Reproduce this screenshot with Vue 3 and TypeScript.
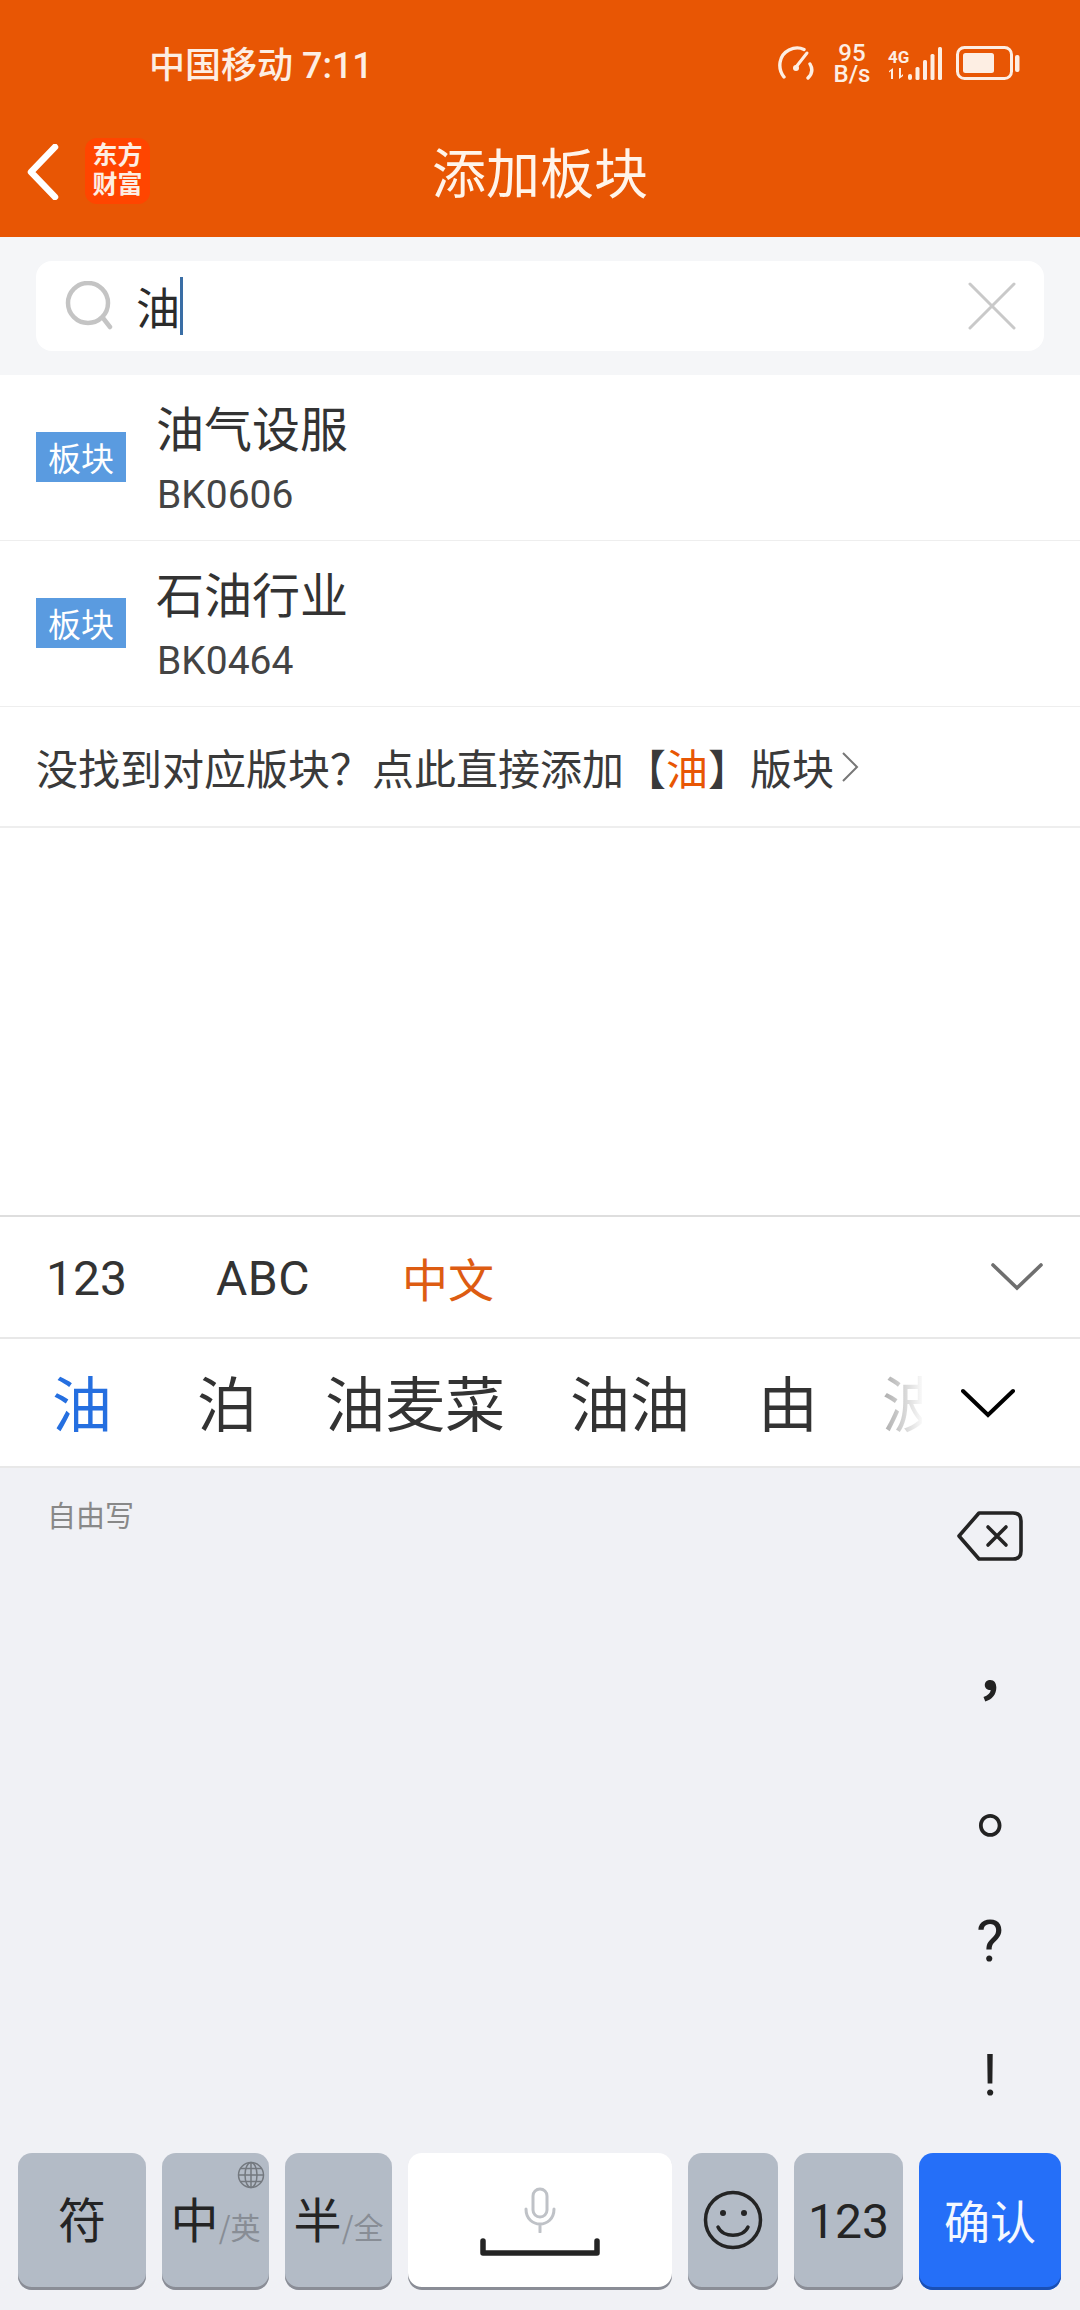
<script setup lang="ts">
interface Row { name: string; code: string }
const rows: Row[] = [
  { name: '油气设服', code: 'BK0606' },
  { name: '石油行业', code: 'BK0464' },
]
</script>

<template>
  <div class="page">
    <header class="head">
      <div class="status">
        <span class="carrier">中国移动 7:11</span>
        <div class="sys">
          <svg class="gauge" width="40" height="34" viewBox="0 0 40 34" fill="none" stroke="#fdeee3" stroke-linecap="round">
            <path d="M7 31 C0 22 2 9 12 4 C17 1.5 23 1.5 27 3.5" stroke-width="3.4" />
            <path d="M33 18 C36 23 35 28 31 32" stroke-width="3.4" />
            <path d="M19 21 L30 7" stroke-width="3" />
            <circle cx="19" cy="22" r="3" fill="#fdeee3" stroke="none" />
          </svg>
          <div class="speed"><span>95</span><span>B/s</span></div>
          <div class="net">
            <span class="g4">4G</span>
            <svg width="20" height="11" viewBox="0 0 20 11" fill="#fdeee3">
              <path d="M5 0v11H3V3L1 4.500V3zM11 0h2v8l2-2v2l-4 3z" />
            </svg>
          </div>
          <svg class="signal" width="36" height="33" viewBox="0 0 36 33" fill="#fdeee3">
            <rect x="0" y="27" width="4" height="6" rx="2" />
            <rect x="7.500" y="20" width="4" height="13" rx="1.500" />
            <rect x="15" y="13" width="4" height="20" rx="1.500" />
            <rect x="22.500" y="7" width="4" height="26" rx="1.500" />
            <rect x="30" y="0" width="4" height="33" rx="1.500" />
          </svg>
          <svg class="battery" width="64" height="34" viewBox="0 0 64 34" fill="none">
            <rect x="1.500" y="1.500" width="54" height="31" rx="7" stroke="#fdeee3" stroke-width="3" />
            <rect x="7" y="7" width="31" height="20" rx="2.500" fill="#fdeee3" />
            <rect x="59" y="9" width="4.500" height="17" rx="2" fill="#fdeee3" />
          </svg>
        </div>
      </div>
      <nav class="nav">
        <div class="nav-left">
          <svg class="back" width="32" height="56" viewBox="0 0 32 56" fill="none" stroke="#fff" stroke-width="6.500" stroke-linecap="round" stroke-linejoin="round">
            <path d="M28 3 L4 28 L28 53" />
          </svg>
          <div class="logo"><span>东方</span><span>财富</span></div>
        </div>
        <h1 class="title">添加板块</h1>
        <div></div>
      </nav>
    </header>

    <section class="search-wrap">
      <div class="search">
        <svg class="lens" width="48" height="50" viewBox="0 0 48 50" fill="none" stroke="#c4c4c4" stroke-width="4.500" stroke-linecap="round">
          <circle cx="23" cy="22" r="20" />
          <path d="M38 37 L45 46" />
        </svg>
        <span class="query">油</span>
        <span class="caret"></span>
        <svg class="clear" width="48" height="48" viewBox="0 0 48 48" stroke="#c9c9c9" stroke-width="3" stroke-linecap="round">
          <path d="M2 2 L46 46 M46 2 L2 46" />
        </svg>
      </div>
    </section>

    <section class="list">
      <div v-for="r in rows" :key="r.code" class="row">
        <span class="badge">板块</span>
        <div class="row-text">
          <span class="name">{{ r.name }}</span>
          <span class="code">{{ r.code }}</span>
        </div>
      </div>
      <div class="add">
        <span>没找到对应版块？点此直接添加【<em>油</em>】版块</span>
        <svg width="18" height="30" viewBox="0 0 18 30" fill="none" stroke="#777" stroke-width="2">
          <path d="M2 1 L16 15 L2 29" />
        </svg>
      </div>
    </section>

    <section class="blank"></section>

    <section class="tabs">
      <span class="tab t1">123</span>
      <span class="tab t2">ABC</span>
      <span class="tab active">中文</span>
      <svg class="tabs-chev" width="52" height="28" viewBox="0 0 52 28" fill="none" stroke="#6f6f6f" stroke-width="3.600" stroke-linecap="round">
        <path d="M2 2 L26 25 L50 2" />
      </svg>
    </section>

    <section class="cands">
      <div class="cand-track">
        <span class="cand cur">油</span>
        <span class="cand c2">泊</span>
        <span class="cand c3">油麦菜</span>
        <span class="cand c4">油油</span>
        <span class="cand c5">由</span>
        <span class="cand c6">波</span>
      </div>
      <svg class="cand-chev" width="54" height="30" viewBox="0 0 54 30" fill="none" stroke="#000" stroke-width="4" stroke-linecap="round">
        <path d="M2 3 L27 27 L52 3" />
      </svg>
    </section>

    <section class="kb">
      <div class="pad">
        <span class="hint">自由写</span>
        <div class="punct">
          <svg class="del" width="66" height="50" viewBox="0 0 66 50" fill="none" stroke="#242424" stroke-width="3.600" stroke-linejoin="round" stroke-linecap="round">
            <path d="M22 2 H56 Q64 2 64 10 V40 Q64 48 56 48 H22 L2 25 Z" />
            <path d="M31 16 L49 34 M49 16 L31 34" />
          </svg>
          <span class="p comma">，</span>
          <span class="p dot">。</span>
          <span class="p q">?</span>
          <span class="p ex">!</span>
        </div>
      </div>
      <div class="keys">
        <div class="key k1"><span class="big">符</span></div>
        <div class="key k2">
          <svg class="globe" width="28" height="28" viewBox="0 0 28 28" fill="none" stroke="#74797f" stroke-width="1.500">
            <circle cx="14" cy="14" r="12.500" />
            <ellipse cx="14" cy="14" rx="6" ry="12.500" />
            <path d="M14 1.500 V26.500 M1.500 14 H26.500 M3.500 7.500 H24.500 M3.500 20.500 H24.500" />
          </svg>
          <span class="big">中</span><span class="sub">/英</span>
        </div>
        <div class="key k2"><span class="big">半</span><span class="sub">/全</span></div>
        <div class="key space">
          <svg width="40" height="46" viewBox="0 0 40 46" fill="none" stroke="#bfc2c7" stroke-width="3" stroke-linecap="round">
            <rect x="13" y="2" width="14" height="28" rx="7" />
            <path d="M6 22 C6 42 34 42 34 22 M20 37 V45" />
          </svg>
          <svg width="120" height="18" viewBox="0 0 120 18" fill="none" stroke="#242424" stroke-width="5.500" stroke-linecap="round" stroke-linejoin="round">
            <path d="M3 3 V15 H117 V3" />
          </svg>
        </div>
        <div class="key k3">
          <svg width="60" height="60" viewBox="0 0 60 60" fill="none" stroke="#242424" stroke-width="3.500" stroke-linecap="round">
            <circle cx="30" cy="30" r="27.500" />
            <path d="M15 37 C20 48 40 48 45 37" />
            <circle cx="20" cy="23" r="3" fill="#242424" stroke="none" />
            <circle cx="41" cy="23" r="3" fill="#242424" stroke="none" />
          </svg>
        </div>
        <div class="key k4"><span class="num">123</span></div>
        <div class="key ok"><span>确认</span></div>
      </div>
    </section>
  </div>
</template>

<style scoped>
.page {
  width: 1080px;
  height: 2310px;
  display: flex;
  flex-direction: column;
  background: #fff;
  overflow: hidden;
  font-family: "Noto Sans CJK SC", "Noto Sans", Roboto, sans-serif;
  color: #333;
}
.head {
  height: 237px;
  flex: none;
  background: #e85604;
  color: #fff;
}
.status {
  height: 126px;
  box-sizing: border-box;
  padding: 0 60px 0 149px;
  display: flex;
  align-items: center;
  justify-content: space-between;
}
.carrier {
  font-size: 36px;
  color: #fdeee3;
  font-family: Roboto, "Noto Sans CJK SC", sans-serif;
  font-weight: 500;
  margin-top: -3px;
}
.sys {
  display: flex;
  align-items: center;
  color: #fdeee3;
}
.speed {
  display: flex;
  flex-direction: column;
  align-items: center;
  margin-left: 16px;
  margin-top: 2px;
  font: 500 24px/21px Roboto, sans-serif;
  width: 38px;
}
.net {
  display: flex;
  flex-direction: column;
  margin-left: 17px;
  width: 21px;
}
.g4 {
  font: 700 17px/18px Roboto, sans-serif;
  height: 20px;
}
.signal { margin-left: -1px; }
.battery { margin-left: 12px; }
.nav {
  height: 92px;
  display: grid;
  grid-template-columns: 1fr auto 1fr;
  align-items: center;
}
.nav-left {
  display: flex;
  align-items: center;
  padding-left: 27px;
}
.logo {
  width: 65px;
  height: 66px;
  margin-left: 26px;
  margin-top: -2px;
  padding-bottom: 6px;
  box-sizing: border-box;
  background: #ff4500;
  border-radius: 12px;
  display: flex;
  flex-direction: column;
  align-items: center;
  justify-content: center;
  font: 700 25px/29px "Noto Sans CJK SC", sans-serif;
  color: #fdeee3;
}
.title {
  margin: 0 0 3px;
  font-size: 54px;
  font-weight: 400;
  line-height: 70px;
  color: #fff4ea;
}
.search-wrap {
  height: 138px;
  flex: none;
  box-sizing: border-box;
  padding: 24px 36px;
  background: #f5f6f8;
}
.search {
  height: 90px;
  background: #fff;
  border-radius: 16px;
  display: flex;
  align-items: center;
  padding: 0 28px 0 29px;
}
.query {
  margin-left: 23px;
  font-size: 44px;
  color: #2b2b2b;
}
.caret {
  width: 3px;
  height: 58px;
  margin-left: 0;
  background: #3a6ea5;
}
.clear { margin-left: auto; }
.list { flex: none; }
.row {
  height: 166px;
  box-sizing: border-box;
  border-bottom: 1px solid #eee;
  display: flex;
  align-items: center;
  padding-left: 36px;
}
.badge {
  width: 90px;
  height: 50px;
  margin-top: -2px;
  background: #5a9be0;
  color: #fff;
  font-size: 33px;
  line-height: 50px;
  text-align: center;
}
.row-text {
  display: flex;
  flex-direction: column;
  margin-left: 31px;
}
.name {
  font-size: 48px;
  line-height: 70px;
  color: #333;
  margin-left: -1px;
  margin-top: -5px;
}
.code {
  font: 400 39px/50px Roboto, sans-serif;
  color: #444;
  margin-top: 9px;
}
.add {
  height: 121px;
  box-sizing: border-box;
  border-bottom: 2px solid #eee;
  display: flex;
  align-items: center;
  padding-left: 36px;
  font-size: 42px;
  color: #3a3a3a;
}
.add em {
  font-style: normal;
  color: #e85604;
}
.add svg { margin-left: 7px; }
.blank {
  flex: 1;
  border-bottom: 2px solid #dedede;
}
.tabs {
  height: 122px;
  flex: none;
  box-sizing: border-box;
  border-bottom: 2px solid #e8e8e8;
  display: flex;
  align-items: center;
  padding: 0 37px 0 46px;
}
.tab {
  font-size: 48px;
  color: #333;
  font-family: Roboto, "Noto Sans CJK SC", sans-serif;
  margin-top: 3px;
}
.t2 {
  margin-left: 89px;
  letter-spacing: 0.5px;
}
.active {
  margin-left: 92px;
  margin-top: 0;
  font-size: 46px;
  color: #dd5c12;
}
.tabs-chev { margin-left: auto; }
.cands {
  height: 129px;
  flex: none;
  box-sizing: border-box;
  border-bottom: 2px solid #e8e8e8;
  display: flex;
  align-items: center;
}
.cand-track {
  width: 922px;
  flex: none;
  overflow: hidden;
  white-space: nowrap;
  display: flex;
  padding-left: 52px;
  box-sizing: border-box;
  margin-top: -3px;
}
.cand {
  flex: none;
  font-size: 60px;
  line-height: 90px;
  color: #333;
}
.cur { color: #256fe0; }
.c2 { margin-left: 85px; }
.c3 { margin-left: 68px; }
.c4 { margin-left: 65px; }
.c5 { margin-left: 68px; }
.c6 {
  margin-left: 64px;
  color: transparent;
  background: linear-gradient(90deg, #aaa 0, #fff 72%);
  background-clip: text;
  -webkit-background-clip: text;
}
.cand-chev { margin-left: 39px; }
.kb {
  height: 842px;
  flex: none;
  box-sizing: border-box;
  background: #f0f1f5;
  display: flex;
  flex-direction: column;
}
.pad {
  flex: 1;
  display: flex;
  justify-content: space-between;
}
.hint {
  font-size: 29px;
  line-height: 40px;
  color: #888;
  margin: 26px 0 0 47px;
}
.punct {
  width: 180px;
  display: flex;
  flex-direction: column;
  align-items: center;
  padding-top: 43px;
}
.p {
  display: block;
  height: 60px;
  line-height: 60px;
  text-align: center;
  color: #222;
}
.comma {
  font: 700 56px/60px "Noto Sans CJK TC", sans-serif;
  margin-top: 95px;
}
.dot {
  font: 400 74px/60px "Noto Sans CJK TC", sans-serif;
  margin-top: 75px;
}
.q {
  font: 400 58px/60px Roboto, sans-serif;
  margin-top: 60px;
}
.ex {
  font: 400 58px/60px Roboto, sans-serif;
  margin-top: 74px;
}
.keys {
  height: 137px;
  flex: none;
  margin-bottom: 20px;
  padding: 0 18px;
  display: flex;
  gap: 16px;
}
.key {
  position: relative;
  box-sizing: border-box;
  height: 137px;
  padding-bottom: 10px;
  background: #b3bbc6;
  border-radius: 14px;
  box-shadow: inset 0 -3px 0 #8a8d96;
  display: flex;
  align-items: center;
  justify-content: center;
  color: #242424;
}
.k1 { width: 128px; }
.k2 { width: 107px; }
.k3 { width: 90px; padding-bottom: 3px; }
.k4 { width: 109px; padding-bottom: 0; }
.space {
  width: 264px;
  background: #fff;
  flex-direction: column;
  gap: 5px;
  padding-bottom: 0;
}
.ok {
  width: 142px;
  padding-bottom: 6px;
  background: #256ff8;
  box-shadow: inset 0 -3px 0 #1a50b5;
  color: #f4f8ff;
  font-size: 46px;
}
.big { font-size: 48px; line-height: 60px; }
.sub {
  font-size: 30px;
  line-height: 40px;
  color: #888d95;
  margin-top: 18px;
  white-space: nowrap;
}
.num { font: 400 48px/60px Roboto, sans-serif; }
.globe {
  position: absolute;
  top: 8px;
  right: 4px;
}
</style>
